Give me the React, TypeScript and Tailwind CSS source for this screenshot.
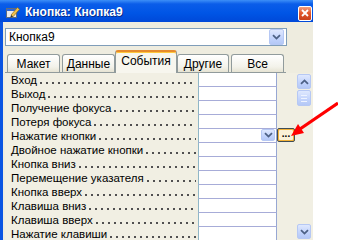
import React from 'react';

const events = [
  'Вход',
  'Выход',
  'Получение фокуса',
  'Потеря фокуса',
  'Нажатие кнопки',
  'Двойное нажатие кнопки',
  'Кнопка вниз',
  'Перемещение указателя',
  'Кнопка вверх',
  'Клавиша вниз',
  'Клавиша вверх',
  'Нажатие клавиши',
];

const tabs = [
  { label: 'Макет', w: 'w-[53px] mr-[2px]' },
  { label: 'Данные', w: 'w-[53px]' },
  { label: 'События', w: 'w-[62px]', active: true },
  { label: 'Другие', w: 'w-[52px] mr-[2px]' },
  { label: 'Все', w: 'w-[53px]' },
];

const Chevron = ({ up = false }: { up?: boolean }) => (
  <svg width="9" height="6" viewBox="0 0 9 6" className={up ? 'rotate-180' : ''}>
    <path d="M1 1.2 L4.5 4.6 L8 1.2" fill="none" stroke="#4d6185" strokeWidth="1.8" />
  </svg>
);

const XpButton = ({ className = '', children }: { className?: string; children?: React.ReactNode }) => (
  <div
    className={`flex items-center justify-center rounded-[2px] border border-[#b6c8f4] bg-[linear-gradient(to_bottom,#dfe8fe,#c2d3fc_60%,#b4c8f6)] ${className}`}
  >
    {children}
  </div>
);

const FormIcon = () => (
  <svg width="16" height="15" viewBox="0 0 16 15">
    <rect x="1.5" y="4.5" width="10" height="9" fill="#ececec" stroke="#5d6b80" />
    <rect x="2" y="5" width="9" height="2" fill="#2f66d4" />
    <path d="M6 11 L12.5 3.5 L14.5 5.3 L8 12.8 Z" fill="#f4c24a" stroke="#8b6a1c" strokeWidth="0.7" />
    <path d="M6 11 L8 12.8 L5.3 13.6 Z" fill="#333" />
  </svg>
);

export default function App() {
  return (
    <div className="relative w-[338px] h-[240px] overflow-hidden bg-white font-['Liberation_Sans',Arial,sans-serif]">
      <div className="w-[313px] h-[240px] flex flex-col">
        {/* title bar */}
        <div className="h-[22px] flex items-center pl-[5px] pr-[1px] bg-[linear-gradient(to_bottom,#3d8ff7_0%,#0b5de9_18%,#0055e5_60%,#0048d8_100%)]">
          <FormIcon />
          <span className="ml-[4px] pt-[1px] text-[12px] font-bold text-white leading-none [text-shadow:1px_1px_0_#0a2c8a]">
            Кнопка: Кнопка9
          </span>
          <div className="ml-auto mt-[4px] w-[14px] h-[15px] rounded-[2px] border border-white bg-[linear-gradient(to_bottom,#f3a07f,#e2582d_45%,#c8401b)] flex items-center justify-center">
            <svg width="8" height="8" viewBox="0 0 8 8">
              <path d="M1 1 L7 7 M7 1 L1 7" stroke="white" strokeWidth="1.8" />
            </svg>
          </div>
        </div>

        <div className="flex-1 flex flex-col border-l-[3px] border-[#0a54e2] bg-[#eeecdf] overflow-hidden">
          {/* object combobox */}
          <div className="ml-[2px] mt-[6px] w-[282px] h-[21px] bg-white border border-[#7f9db9] flex items-center pl-[3px] pr-[2px]">
            <span className="flex-1 text-[12px] leading-none text-black">Кнопка9</span>
            <XpButton className="w-[15px] h-[16px]">
              <Chevron />
            </XpButton>
          </div>

          {/* tabs */}
          <div className="ml-[2px] mt-[4px] w-[281px] h-[23px] border-b border-[#919b9c] flex items-end pl-[2px]">
            {tabs.map((t) =>
              t.active ? (
                <div
                  key={t.label}
                  className={`${t.w} relative h-[23px] -mb-px flex items-center justify-center pb-[3px] bg-[#f7f6ee] border-x border-[#919b9c] border-t-[2px] border-t-[#e68b2c] rounded-t-[3px] shadow-[inset_0_1px_0_#ffc83c] text-[12px] text-black`}
                >
                  {t.label}
                </div>
              ) : (
                <div
                  key={t.label}
                  className={`${t.w} h-[18px] flex items-center justify-center border-x border-t border-[#919b9c] rounded-t-[3px] bg-[linear-gradient(to_bottom,#ffffff,#f3f2ea_70%,#e6e3d3)] text-[12px] text-black`}
                >
                  {t.label}
                </div>
              )
            )}
          </div>

          {/* property rows + scrollbar */}
          <div className="flex-1 flex ml-[2px] bg-[#f1efe3]">
            <div className="w-[292px] flex flex-col">
              {events.map((e, i) => (
                <div key={e} className="h-[14px] flex shrink-0">
                  <div className="w-[193px] pl-[6px] pr-[2px] flex">
                    <span className="whitespace-nowrap text-[11.5px] leading-[14px] text-black">{e}</span>
                    {/* dotted leader */}
                    <div className="flex-1 ml-[3px] bg-[linear-gradient(to_right,#505050_2px,transparent_2px)] bg-[length:6px_2px] bg-repeat-x bg-[position:0_9px]" />
                  </div>
                  <div className="w-[79px] bg-white border-x border-b border-l-[#8fb6c6] border-r-[#97a7d3] border-b-[#a7acd8] flex items-start justify-end">
                    {i === 4 && (
                      <XpButton className="w-[14px] h-[12px] mr-[1px]">
                        <Chevron />
                      </XpButton>
                    )}
                  </div>
                  <div className="w-[20px] flex items-start">
                    {i === 4 && (
                      <div className="-mt-[1px] w-[18px] h-[14px] rounded-[2px] border border-[#3f4d56] p-[1px] bg-[#f2b23a]">
                        <div className="w-full h-full rounded-[1px] bg-[#fbf1d6] flex items-center justify-center text-[10px] font-bold leading-[8px] text-black pb-[2px]">
                          ...
                        </div>
                      </div>
                    )}
                  </div>
                </div>
              ))}
            </div>
            <div className="w-[14px] flex flex-col pt-[1px] pb-[2px]">
              <XpButton className="h-[15px]">
                <Chevron up />
              </XpButton>
              <XpButton className="mt-[1px] h-[16px] flex-col gap-[2px]">
                <div className="w-[6px] h-px bg-[#eef3ff]" />
                <div className="w-[6px] h-px bg-[#eef3ff]" />
                <div className="w-[6px] h-px bg-[#eef3ff]" />
              </XpButton>
              <div className="flex-1" />
              <XpButton className="h-[15px]">
                <Chevron />
              </XpButton>
            </div>
          </div>
        </div>
      </div>

      {/* red pointer arrow */}
      <svg className="absolute left-0 top-0 pointer-events-none" width="338" height="240">
        <line x1="338" y1="103" x2="300" y2="129" stroke="#ff0000" strokeWidth="3.2" />
        <polygon points="291,136 304,133 298,124" fill="#ff0000" />
      </svg>
    </div>
  );
}
